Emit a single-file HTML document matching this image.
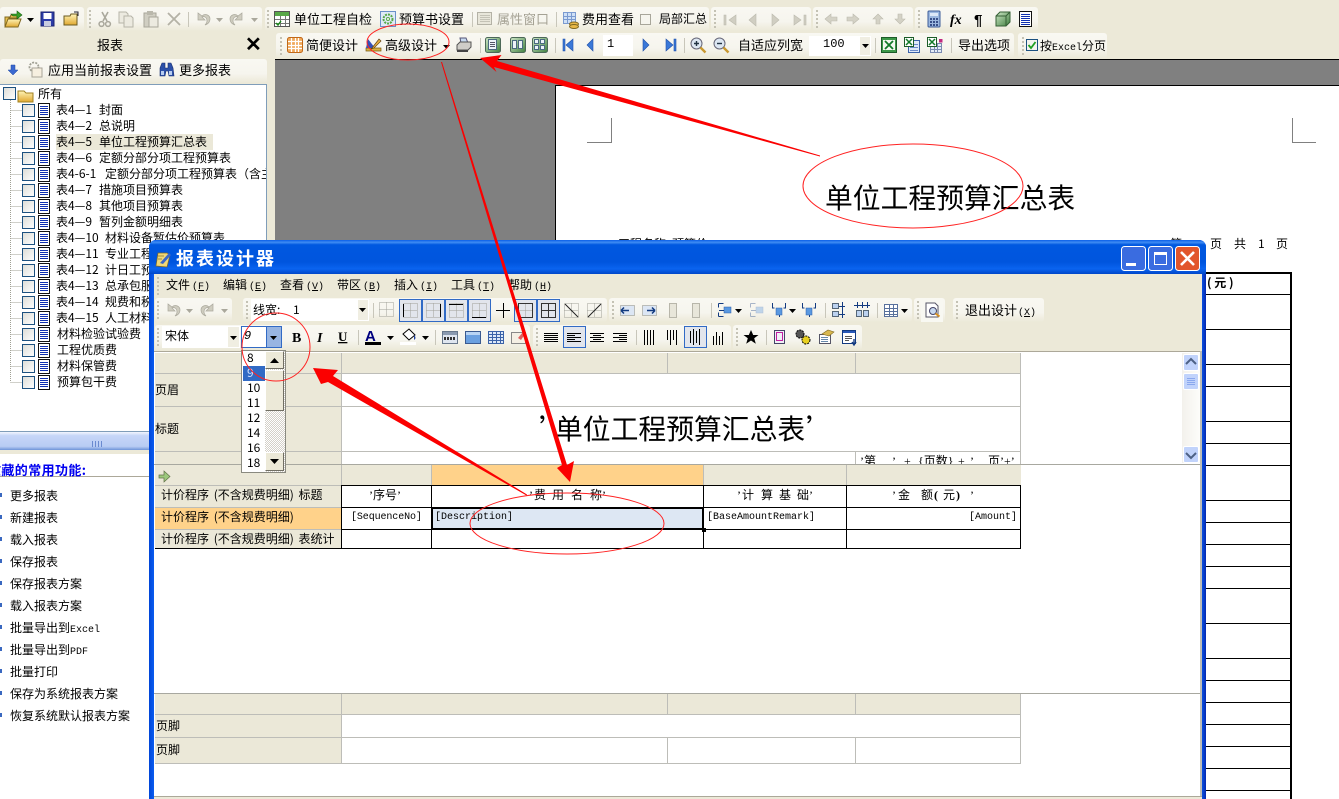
<!DOCTYPE html>
<html><head><meta charset="utf-8"><title>报表设计器</title>
<style>
html,body{margin:0;padding:0;background:#ece9d8}
#r{position:relative;width:1339px;height:799px;overflow:hidden;background:#ece9d8;font-family:"WenQuanYi Zen Hei","Noto Sans CJK SC",sans-serif;color:#000}
#r div{position:absolute}
p{position:absolute;margin:0;white-space:nowrap;line-height:16px;height:16px;font-size:12px}
.m{font-size:13px}
.g{color:#a5a294}
.c{font-family:"Liberation Mono",monospace;font-size:10px}
.s{font-family:"Liberation Serif","WenQuanYi Zen Hei",sans-serif}
.tb{background:linear-gradient(#f9f8f2,#f6f5ee 60%,#ece9d8);border-radius:3px}
.l{background:#bdbdb8}
.k{background:#000}
.bg{background:#ebe8d8}
svg{position:absolute;left:0;top:0;overflow:visible}
</style></head><body><div id="r">

<svg width="0" height="0"><defs>
<linearGradient id="cg" x1="0" y1="0" x2="1" y2="1"><stop offset="0" stop-color="#dcdcd6"/><stop offset="1" stop-color="#fff"/></linearGradient>
<linearGradient id="bl" x1="0" y1="0" x2="0" y2="1"><stop offset="0" stop-color="#c6dcf8"/><stop offset="1" stop-color="#3e74c8"/></linearGradient>
<linearGradient id="gr" x1="0" y1="0" x2="1" y2="1"><stop offset="0" stop-color="#cfe8c8"/><stop offset="1" stop-color="#3f7f3f"/></linearGradient>
<linearGradient id="yl" x1="0" y1="0" x2="0" y2="1"><stop offset="0" stop-color="#fff4b8"/><stop offset="1" stop-color="#e0a830"/></linearGradient>
<g id="cb"><rect x=".5" y=".5" width="12" height="12" fill="url(#cg)" stroke="#1c5180"/></g>
<g id="doc"><rect x=".5" y=".5" width="11" height="14" fill="#fff" stroke="#111"/><path d="M2 3.500h8M2 5.500h8M2 7.500h8M2 9.500h8M2 11.500h8" stroke="#1030b0"/></g>
<g id="grip"><path d="M0 1h2v2H0zM0 5h2v2H0zM0 9h2v2H0zM0 13h2v2H0zM0 17h2v2H0z" fill="#c4c2b4"/></g>
<g id="dn"><path d="M0 0h7L3.5 4z" fill="#000"/></g>
<g id="dng"><path d="M0 0h7L3.5 4z" fill="#aaa89c"/></g>
<g id="save"><rect x="1" y="1" width="13" height="14" fill="#2c3ca8" stroke="#1c2470"/><rect x="3.5" y="2" width="8" height="6" fill="#fff"/><rect x="4" y="10" width="7" height="5" fill="#c8cce0"/></g>
<g id="folder"><path d="M1 5h6l1-2h6v11H1z" fill="url(#yl)" stroke="#6a5a20"/><path d="M11 1h4v4" stroke="#223" fill="none"/></g>
<g id="open"><path d="M1 6h5l1-2h6v3H5L2 15H1z" fill="#e8c050" stroke="#806820"/><path d="M4 8h13l-3 8H1z" fill="url(#yl)" stroke="#806820"/><path d="M7 3h6V0l5 4-5 4V5H9z" fill="#38a028" stroke="#186010" stroke-width=".6"/></g>
<g id="cut"><path d="M5 1l5 9M11 1L6 10" stroke="#aaa89c" stroke-width="1.6" fill="none"/><circle cx="4.5" cy="13" r="2.4" fill="none" stroke="#aaa89c" stroke-width="1.5"/><circle cx="11" cy="13" r="2.4" fill="none" stroke="#aaa89c" stroke-width="1.5"/></g>
<g id="copy"><path d="M1 1h7l2 2v9H1z" fill="#eceae0" stroke="#b6b4a8"/><path d="M6 5h7l2 2v9H6z" fill="#eceae0" stroke="#b6b4a8"/></g>
<g id="paste"><rect x="1" y="2" width="12" height="14" fill="#d0cec2" stroke="#a8a69a"/><rect x="4" y="0" width="6" height="4" fill="#bab8ac"/><rect x="6" y="6" width="9" height="10" fill="#eceae0" stroke="#a8a69a"/></g>
<g id="x"><path d="M2 2l12 12M14 2L2 14" stroke="#b4b2a6" stroke-width="1.8"/></g>
<g id="undo"><path d="M3 2v7h7l-3-3c2-1 5 0 5 4 0 2-1 3-2 4 3-1 5-3 5-6 0-4-5-6-8-3L3 2z" fill="#cfcdc0" stroke="#aaa89c" stroke-width=".7"/></g>
<g id="redo"><path d="M13 2v7H6l3-3C7 5 4 6 4 10c0 2 1 3 2 4-3-1-5-3-5-6 0-4 5-6 8-3l4-3z" fill="#cfcdc0" stroke="#aaa89c" stroke-width=".7"/></g>
<g id="tbl"><rect x=".5" y=".5" width="15" height="15" fill="#fff" stroke="#555"/><rect x="1" y="1" width="14" height="4" fill="#58a848"/><path d="M1 8.500h14M1 12.500h14M6.500 5v10M11.500 5v10" stroke="#777"/><path d="M2 12l2 2 3-4" stroke="#1a8a1a" fill="none" stroke-width="1.4"/></g>
<g id="gear"><rect x=".5" y=".5" width="15" height="15" fill="#dfeaf6" stroke="#6a90c8"/><circle cx="8" cy="8" r="4.5" fill="none" stroke="#58a848" stroke-width="2" stroke-dasharray="2 1"/><circle cx="8" cy="8" r="1.5" fill="#fff" stroke="#58a848"/></g>
<g id="prop"><rect x=".5" y="1.500" width="14" height="12" fill="#e8e6da" stroke="#b4b2a6"/><path d="M3 4.500h10M3 6.500h10M3 8.500h10M3 10.500h10" stroke="#c4c2b6"/></g>
<g id="coin"><rect x=".5" y=".5" width="12" height="11" fill="#cfe0f6" stroke="#7a9ad0"/><path d="M1 4.500h12M1 7.500h12M4.500 1v11M8.500 1v11" stroke="#7a9ad0"/><ellipse cx="11" cy="12" rx="4.5" ry="2" fill="#e8b848" stroke="#806820"/><ellipse cx="11" cy="14.5" rx="4.5" ry="2" fill="#e8b848" stroke="#806820"/></g>
<g id="gf"><path d="M1 3h2v10H1zM13 3L6 8l7 5z" fill="#d0cec2" stroke="#bbb9ad" stroke-width=".6"/></g>
<g id="gp"><path d="M12 2L5 8l7 6z" fill="#d0cec2" stroke="#bbb9ad" stroke-width=".6"/></g>
<g id="gn"><path d="M4 2l7 6-7 6z" fill="#d0cec2" stroke="#bbb9ad" stroke-width=".6"/></g>
<g id="gl"><path d="M13 3h2v10h-2zM3 3l7 5-7 5z" fill="#d0cec2" stroke="#bbb9ad" stroke-width=".6"/></g>
<g id="al"><path d="M2 8l6-5v3h6v4H8v3z" fill="#d4d2c6" stroke="#bbb9ad" stroke-width=".6"/></g>
<g id="ar"><path d="M14 8L8 3v3H2v4h6v3z" fill="#d4d2c6" stroke="#bbb9ad" stroke-width=".6"/></g>
<g id="au"><path d="M8 3l5 5h-3v5H6V8H3z" fill="#d4d2c6" stroke="#bbb9ad" stroke-width=".6"/></g>
<g id="ad"><path d="M8 13l5-5h-3V3H6v5H3z" fill="#d4d2c6" stroke="#bbb9ad" stroke-width=".6"/></g>
<g id="calc"><rect x="2" y="0" width="12" height="16" rx="1" fill="#9cb8e0" stroke="#3c5c98"/><rect x="4" y="2" width="8" height="3" fill="#dce8f8"/><path d="M4 7h2v2H4zM7 7h2v2H7zM10 7h2v2h-2zM4 10h2v2H4zM7 10h2v2H7zM10 10h2v2h-2zM4 13h2v2H4zM7 13h2v2H7zM10 13h2v2h-2z" fill="#38508a"/></g>
<g id="cube"><path d="M1 5l4-4h10v10l-4 4H1z" fill="url(#gr)" stroke="#355f35"/><path d="M1 5h10v10M11 5l4-4" fill="none" stroke="#355f35"/></g>
<g id="list"><rect x=".5" y=".5" width="12" height="15" fill="#fff" stroke="#111"/><path d="M2 3.500h9M2 5.500h9M2 7.500h9M2 9.500h9M2 11.500h9M2 13.500h9" stroke="#1030b0"/></g>
<g id="grid"><rect x=".5" y=".5" width="15" height="15" rx="2" fill="#f0a858" stroke="#c06818"/><path d="M1 4.500h14M1 8.500h14M1 11.500h14M4.500 1v14M8.500 1v14M11.500 1v14" stroke="#fff" stroke-width="1.2"/></g>
<g id="pen"><path d="M1 14h15v-3H1z" fill="#d8b040" stroke="#7a5a10" stroke-width=".7"/><path d="M3 2l7 9H1z" fill="#3450b8"/><path d="M7 11L14 2l2 2-7 7-3 1z" fill="#e8b040" stroke="#604010" stroke-width=".7"/></g>
<g id="prt"><path d="M4 1h6l2 5H5z" fill="#c8daf0" stroke="#557"/><path d="M1 8l3-3h11v5l-3 3H1z" fill="#cfcdc8" stroke="#555"/><path d="M1 13h11v2H1z" fill="#444"/></g>
<g id="lay1"><rect x=".5" y=".5" width="15" height="15" rx="2" fill="url(#gr)" stroke="#4c6858"/><rect x="3.500" y="2.500" width="8" height="10" fill="#f0f4fa" stroke="#4a6a80"/><path d="M5 5.500h5M5 7.500h5M5 9.500h5" stroke="#556"/></g>
<g id="lay2"><rect x=".5" y=".5" width="15" height="15" rx="2" fill="url(#gr)" stroke="#4c6858"/><rect x="2.500" y="3.500" width="4" height="8" fill="#eef2fa" stroke="#4a6a80"/><rect x="8.500" y="3.500" width="4" height="8" fill="#eef2fa" stroke="#4a6a80"/></g>
<g id="lay3"><rect x=".5" y=".5" width="15" height="15" rx="2" fill="url(#gr)" stroke="#4c6858"/><path d="M2.500 2.500h4v4h-4zM8.500 2.500h4v4h-4zM2.500 8.500h4v4h-4zM8.500 8.500h4v4h-4z" fill="#eef2fa" stroke="#4a6a80"/></g>
<g id="first"><path d="M2 2h2v12H2zM12 2v12L5 8z" fill="#3a78d8" stroke="#2050a8" stroke-width=".6"/></g>
<g id="prev"><path d="M11 2v12L5 8z" fill="#3a78d8" stroke="#2050a8" stroke-width=".6"/></g>
<g id="next"><path d="M5 2v12l6-6z" fill="#3a78d8" stroke="#2050a8" stroke-width=".6"/></g>
<g id="last"><path d="M12 2h2v12h-2zM4 2v12l7-6z" fill="#3a78d8" stroke="#2050a8" stroke-width=".6"/></g>
<g id="zp"><circle cx="6.500" cy="6.500" r="5.500" fill="#dce6f2" stroke="#667"/><path d="M4 6.500h5M6.500 4v5" stroke="#234" stroke-width="1.4"/><path d="M10.500 10.500l5 5" stroke="#c89830" stroke-width="2.400"/></g>
<g id="zm"><circle cx="6.500" cy="6.500" r="5.500" fill="#dce6f2" stroke="#667"/><path d="M4 6.500h5" stroke="#234" stroke-width="1.4"/><path d="M10.500 10.500l5 5" stroke="#c89830" stroke-width="2.400"/></g>
<g id="xl"><rect x=".5" y=".5" width="15" height="15" fill="#3c9848" stroke="#1c5c28"/><rect x="2" y="3" width="12" height="10" fill="#f4f8f0"/><path d="M4 4l8 8M12 4l-8 8" stroke="#127a28" stroke-width="1.800"/></g>
<g id="xl2"><rect x="4.500" y="3.500" width="11" height="12" fill="#dfe9f8" stroke="#3a62a8"/><path d="M6 7.500h8M6 10.500h8M6 13.500h8" stroke="#6a8ac8"/><rect x=".5" y=".5" width="9" height="9" fill="#fff" stroke="#1c5c28"/><path d="M2 2l6 6M8 2L2 8" stroke="#127a28" stroke-width="1.500"/></g>
<g id="xl3"><rect x="3.500" y="6.500" width="11" height="9" fill="#e4ecf6" stroke="#7a8ab0"/><path d="M3 9.500h11M3 12.500h11M7.500 6v10M10.500 6v10" stroke="#7a8ab0"/><rect x=".5" y=".5" width="9" height="9" fill="#fff" stroke="#1c5c28"/><path d="M2 2l6 6M8 2L2 8" stroke="#127a28" stroke-width="1.500"/><rect x="12" y="2" width="3.500" height="3.500" fill="#c02880"/></g>
<g id="chk"><rect x=".5" y=".5" width="11" height="11" fill="#f4f4ee" stroke="#1c5180"/><path d="M2.500 6l2.500 3 4.500-6" stroke="#20a020" stroke-width="1.800" fill="none"/></g>
<g id="blue"><path d="M6 3h4v5h3l-5 5-5-5h3z" fill="#3a68d0" stroke="#2048a0" stroke-width=".5"/></g>
<g id="setg"><circle cx="6" cy="5" r="4.500" fill="none" stroke="#a0a094" stroke-width="1.800" stroke-dasharray="2 1.200"/><rect x="4" y="6" width="10" height="9" fill="#f6efe0" stroke="#a8a498"/></g>
<g id="bino"><path d="M1 6l2-5h3v5h3V1h3l2 5 1 8h-5l-1-5H7l-1 5H1z" fill="#2c50a8" stroke="#1a3070" stroke-width=".6"/><path d="M2 9h3v4H2zM10 9h3v4h-3z" fill="#b8cdf0"/></g>
<g id="dot"><rect x=".5" y=".5" width="14" height="14" fill="none" stroke="#a0a098" stroke-dasharray="1 1"/><path d="M.5 7.500h14M7.500 .5v14" stroke="#a0a098" stroke-dasharray="1 1"/></g>
<g id="btn"><rect x=".5" y=".5" width="22" height="22" fill="#e2e5ec" stroke="#316ac5"/><g transform="translate(4 4)"><use href="#dot"/></g></g>
<g id="lf"><rect x="1.500" y="3.500" width="14" height="10" fill="#dce6f4" stroke="#8a8a80" stroke-dasharray="1 1"/><path d="M2 8.500h8M2 8.500l3-3M2 8.500l3 3" stroke="#123a80" stroke-width="1.500" fill="none"/></g>
<g id="rt"><rect x="1.500" y="3.500" width="14" height="10" fill="#dce6f4" stroke="#8a8a80" stroke-dasharray="1 1"/><path d="M14 8.500H6M14 8.500l-3-3M14 8.500l-3 3" stroke="#123a80" stroke-width="1.500" fill="none"/></g>
<g id="colx"><path d="M2.500 1.500h5M2.500 14.500h5M2.500 1.500v4M2.500 10.500v4" stroke="#123a80" fill="none"/><rect x="8" y="5" width="7" height="6" fill="#5a98e0" stroke="#2c5ca8" stroke-width=".5"/><path d="M3 8.500h5" stroke="#123a80"/></g>
<g id="rowx"><path d="M1.500 1v5h2M14.500 1v5h-2M8.500 6v9" stroke="#123a80" fill="none"/><rect x="5" y="6" width="6" height="7" fill="#5a98e0" stroke="#2c5ca8" stroke-width=".5"/></g>
<g id="mix"><rect x="1.500" y="1.500" width="6" height="5" fill="#bcd2f0" stroke="#567"/><rect x="1.500" y="9.500" width="6" height="5" fill="#bcd2f0" stroke="#567"/><path d="M11.500 0v16M8 4.500h6M8 12.500h6" stroke="#123a80"/></g>
<g id="mix2"><rect x="2.500" y="8.500" width="5" height="6" fill="#bcd2f0" stroke="#567"/><rect x="9.500" y="8.500" width="5" height="6" fill="#bcd2f0" stroke="#567"/><path d="M0 3.500h16M3.500 0v6M8.500 0v6M13.500 0v6" stroke="#123a80"/></g>
<g id="t3"><rect x=".5" y="1.500" width="13" height="12" fill="#fff" stroke="#58709c"/><path d="M.5 5.500h13M.5 8.500h13M.5 11.500h13M5.500 1.500v12M9.500 1.500v12" stroke="#58709c"/></g>
<g id="pre"><path d="M1 1h9l3 3v11H1z" fill="#fff" stroke="#556"/><circle cx="8" cy="9" r="3.500" fill="#c8daf0" stroke="#446"/><path d="M10.500 11.500l4 3" stroke="#d89020" stroke-width="2"/></g>
<g id="ctl"><rect x="1.500" y="2.500" width="15" height="12" fill="#dfe6f0" stroke="#68788c"/><rect x="2" y="3" width="14" height="3" fill="#8a9ab0"/><path d="M3 9.500h11" stroke="#333" stroke-width="3" stroke-dasharray="2 1"/></g>
<g id="pnl"><rect x="1.500" y="2.500" width="15" height="12" fill="#6aa0e0" stroke="#3a5a90"/><rect x="2" y="3" width="14" height="3" fill="#b8d4f4"/></g>
<g id="tgr"><rect x="1.500" y="2.500" width="15" height="12" fill="#dce8f8" stroke="#3a62a8"/><path d="M1 5.500h15M1 8.500h15M1 11.500h15M5.500 2v13M9.500 2v13M13.500 2v13" stroke="#3a62a8"/></g>
<g id="rtb"><rect x="1.500" y="3.500" width="14" height="11" fill="#f4efe4" stroke="#888"/><path d="M8 9l5-6 2 2-4 6z" fill="#e06060"/></g>
<g id="a1"><path d="M1 3.500h14M1 5.500h14M1 7.500h14M1 9.500h14M1 11.500h14" stroke="#000"/></g>
<g id="a2"><path d="M1 3.500h14M1 5.500h8M1 7.500h14M1 9.500h8M1 11.500h14" stroke="#000"/></g>
<g id="a3"><path d="M1 3.500h14M4 5.500h8M1 7.500h14M4 9.500h8M1 11.500h14" stroke="#000"/></g>
<g id="a4"><path d="M1 3.500h14M7 5.500h8M1 7.500h14M7 9.500h8M1 11.500h14" stroke="#000"/></g>
<g id="v1"><path d="M2.500 0v15M5.500 0v15M8.500 0v15M11.500 0v15" stroke="#000"/></g>
<g id="v2"><path d="M2.500 0v10M5.500 0v15M8.500 0v10M11.500 0v15" stroke="#000"/></g>
<g id="v3"><path d="M2.500 2v12M5.500 0v16M8.500 2v12M11.500 0v16" stroke="#000"/></g>
<g id="v4"><path d="M2.500 6v9M5.500 2v13M8.500 6v9M11.500 2v13" stroke="#000"/></g>
<g id="ico1"><rect x="2.500" y="1.500" width="10" height="13" fill="#f0f0f8" stroke="#446"/><rect x="4.500" y="3.500" width="6" height="8" fill="none" stroke="#c020a0"/></g>
<g id="ico2"><circle cx="5" cy="5" r="4" fill="#555" stroke="#000" stroke-dasharray="2 1"/><circle cx="11" cy="11" r="4" fill="#e8d020" stroke="#000" stroke-dasharray="2 1"/></g>
<g id="ico3"><rect x="1.500" y="5.500" width="11" height="9" fill="#fff" stroke="#556"/><path d="M3 8.500h7M3 10.500h7M3 12.500h7" stroke="#68a"/><path d="M4 5l6-4 6 2-5 4z" fill="#d8b850" stroke="#806820" stroke-width=".6"/></g>
<g id="ico4"><rect x="1.500" y="1.500" width="13" height="13" fill="#fff" stroke="#123a80"/><rect x="2" y="2" width="12" height="2" fill="#2858b8"/><path d="M4 7.500h7M4 9.500h7M4 11.500h4" stroke="#555"/><path d="M13 10v5M11 13l2 3 2-3" stroke="#123a80" stroke-width="1.400" fill="none"/></g>
</defs></svg>

<!-- top toolbars -->
<div class="tb" style="left:0;top:7px;width:84px;height:24px"></div>
<div class="tb" style="left:87px;top:7px;width:175px;height:24px"></div>
<div class="tb" style="left:265px;top:7px;width:444px;height:24px"></div>
<div class="tb" style="left:711px;top:7px;width:100px;height:24px"></div>
<div class="tb" style="left:813px;top:7px;width:100px;height:24px"></div>
<div class="tb" style="left:915px;top:7px;width:123px;height:24px"></div>
<div class="tb" style="left:276px;top:33px;width:738px;height:25px"></div>
<div class="tb" style="left:1018px;top:33px;width:89px;height:25px"></div>
<div class="tb" style="left:0;top:59px;width:267px;height:24px"></div>

<p class="m" style="left:294px;top:11px">单位工程自检</p>
<p class="m" style="left:399px;top:11px">预算书设置</p>
<p class="m g" style="left:497px;top:11px">属性窗口</p>
<p class="m" style="left:582px;top:11px">费用查看</p>
<p style="left:659px;top:11px">局部汇总</p>
<p class="m" style="left:97px;top:37px">报表</p>
<p style="left:245px;top:35px;font-size:20px;font-weight:bold;line-height:20px;height:20px;font-family:'Liberation Sans',sans-serif">✕</p>
<p class="m" style="left:306px;top:37px">简便设计</p>
<p class="m" style="left:385px;top:37px">高级设计</p>
<div style="left:603px;top:35px;width:30px;height:21px;background:#fff"></div>
<p class="c" style="left:607px;top:36px;font-size:12px">1</p>
<p class="m" style="left:738px;top:37px">自适应列宽</p>
<div style="left:809px;top:36px;width:62px;height:20px;background:#fff"></div>
<div style="left:860px;top:37px;width:10px;height:18px;background:#f0eee2"></div>
<p class="c" style="left:823px;top:36px;font-size:12px">100</p>
<p class="m" style="left:958px;top:37px">导出选项</p>
<p class="m" style="left:1040px;top:38px;font-size:12px">按<span style="font-family:'Liberation Mono',monospace;font-size:10px">Excel</span>分页</p>
<p class="m" style="left:48px;top:62px">应用当前报表设置</p>
<p class="m" style="left:179px;top:62px">更多报表</p>

<!-- gray & page -->
<div style="left:275px;top:59px;width:1064px;height:740px;background:#808080;border-top:1px solid #000;box-sizing:border-box"></div>
<div style="left:555px;top:85px;width:784px;height:714px;background:#fff;border-top:1px solid #000;border-left:1px solid #000;box-sizing:border-box"></div>
<div style="left:611px;top:118px;width:1px;height:24px;background:#808080"></div>
<div style="left:587px;top:142px;width:25px;height:1px;background:#808080"></div>
<div style="left:1292px;top:118px;width:1px;height:24px;background:#808080"></div>
<div style="left:1292px;top:142px;width:24px;height:1px;background:#808080"></div>
<p style="left:825px;top:180px;font-size:27.800px;line-height:34px;height:34px">单位工程预算汇总表</p>
<p style="left:618px;top:236px">工程名称: 预算价</p>
<p style="left:1170px;top:236px">第</p>
<p style="left:1210px;top:236px">页</p><p style="left:1234px;top:236px">共</p><p style="left:1258px;top:236px">1</p><p style="left:1276px;top:236px">页</p>
<p style="left:1207px;top:275px;font-weight:bold;font-size:12px">( 元 )</p>
<svg width="1339" height="799">
<path d="M1205 294.500h85M1205 329.500h85M1205 364.500h85M1205 386.500h85M1205 421.500h85M1205 443.500h85M1205 465.500h85M1205 500.500h85M1205 522.500h85M1205 544.500h85M1205 566.500h85M1205 588.500h85M1205 623.500h85M1205 658.500h85M1205 680.500h85M1205 702.500h85M1205 724.500h85M1205 746.500h85M1205 768.500h85M1205 790.500h85" stroke="#000" stroke-width="1"/>
<rect x="1205" y="272" width="86" height="2" fill="#000"/>
<rect x="1290" y="272" width="2" height="527" fill="#000"/>
</svg>

<!-- left panel -->
<div style="left:0;top:84px;width:267px;height:348px;background:#fff;border:1px solid #7f9db9;border-left:0;box-sizing:border-box"></div>
<div style="left:0;top:432px;width:150px;height:18px;background:linear-gradient(#f2f6fe,#c6d6f8 20%,#b8ccf4 80%,#6f94d8)"></div>
<div style="left:0;top:450px;width:150px;height:4px;background:#ece9d8"></div>
<div style="left:0;top:454px;width:150px;height:345px;background:#fff"></div>
<div style="left:0;top:476px;width:150px;height:1px;background:#aca899"></div>
<p class="m" style="left:-12px;top:462px;font-weight:bold;color:#0000f0;letter-spacing:.4px">收藏的常用功能:</p>
<p style="left:38px;top:86px">所有</p>
<div style="left:56px;top:134px;width:157px;height:16px;background:#ebe8d8"></div>
<p style="left:56px;top:102px">表4—1</p><p style="left:99px;top:102px">封面</p>
<p style="left:56px;top:118px">表4—2</p><p style="left:99px;top:118px">总说明</p>
<p style="left:56px;top:134px">表4—5</p><p style="left:99px;top:134px">单位工程预算汇总表</p>
<p style="left:56px;top:150px">表4—6</p><p style="left:99px;top:150px">定额分部分项工程预算表</p>
<p style="left:56px;top:166px">表4-6-1</p>
<div style="left:105px;top:166px;width:161px;height:16px;overflow:hidden"><p style="left:0;top:0">定额分部分项工程预算表（含主</p></div>
<p style="left:56px;top:182px">表4—7</p><p style="left:99px;top:182px">措施项目预算表</p>
<p style="left:56px;top:198px">表4—8</p><p style="left:99px;top:198px">其他项目预算表</p>
<p style="left:56px;top:214px">表4—9</p><p style="left:99px;top:214px">暂列金额明细表</p>
<p style="left:56px;top:230px">表4—10</p><p style="left:105px;top:230px">材料设备暂估价预算表</p>
<p style="left:56px;top:246px">表4—11</p><p style="left:105px;top:246px">专业工程暂估价</p>
<p style="left:56px;top:262px">表4—12</p><p style="left:105px;top:262px">计日工预算表</p>
<p style="left:56px;top:278px">表4—13</p><p style="left:105px;top:278px">总承包服务费</p>
<p style="left:56px;top:294px">表4—14</p><p style="left:105px;top:294px">规费和税金</p>
<p style="left:56px;top:310px">表4—15</p><p style="left:105px;top:310px">人工材料</p>
<p style="left:57px;top:326px">材料检验试验费</p>
<p style="left:57px;top:342px">工程优质费</p>
<p style="left:57px;top:358px">材料保管费</p>
<p style="left:57px;top:374px">预算包干费</p>
<p style="left:10px;top:488px">更多报表</p>
<p style="left:10px;top:510px">新建报表</p>
<p style="left:10px;top:532px">载入报表</p>
<p style="left:10px;top:554px">保存报表</p>
<p style="left:10px;top:576px">保存报表方案</p>
<p style="left:10px;top:598px">载入报表方案</p>
<p style="left:10px;top:620px">批量导出到<span class="c">Excel</span></p>
<p style="left:10px;top:642px">批量导出到<span class="c">PDF</span></p>
<p style="left:10px;top:664px">批量打印</p>
<p style="left:10px;top:686px">保存为系统报表方案</p>
<p style="left:10px;top:708px">恢复系统默认报表方案</p>

<svg width="1339" height="799">
<path d="M10.500 100v282M10.500 110.500h11M10.500 126.500h11M10.500 142.500h11M10.500 158.500h11M10.500 174.500h11M10.500 190.500h11M10.500 206.500h11M10.500 222.500h11M10.500 238.500h11M10.500 254.500h11M10.500 270.500h11M10.500 286.500h11M10.500 302.500h11M10.500 318.500h11M10.500 334.500h11M10.500 350.500h11M10.500 366.500h11M10.500 382.500h11" stroke="#a0a094" stroke-dasharray="1 1"/>
<use href="#cb" x="3" y="87"/><path d="M18 91h6l2 2h7v9H18z" fill="url(#yl)" stroke="#a08020"/>
<g id="rows">
<use href="#cb" x="22" y="104"/><use href="#doc" x="38" y="103"/>
<use href="#cb" x="22" y="120"/><use href="#doc" x="38" y="119"/>
<use href="#cb" x="22" y="136"/><use href="#doc" x="38" y="135"/>
<use href="#cb" x="22" y="152"/><use href="#doc" x="38" y="151"/>
<use href="#cb" x="22" y="168"/><use href="#doc" x="38" y="167"/>
<use href="#cb" x="22" y="184"/><use href="#doc" x="38" y="183"/>
<use href="#cb" x="22" y="200"/><use href="#doc" x="38" y="199"/>
<use href="#cb" x="22" y="216"/><use href="#doc" x="38" y="215"/>
<use href="#cb" x="22" y="232"/><use href="#doc" x="38" y="231"/>
<use href="#cb" x="22" y="248"/><use href="#doc" x="38" y="247"/>
<use href="#cb" x="22" y="264"/><use href="#doc" x="38" y="263"/>
<use href="#cb" x="22" y="280"/><use href="#doc" x="38" y="279"/>
<use href="#cb" x="22" y="296"/><use href="#doc" x="38" y="295"/>
<use href="#cb" x="22" y="312"/><use href="#doc" x="38" y="311"/>
<use href="#cb" x="22" y="328"/><use href="#doc" x="38" y="327"/>
<use href="#cb" x="22" y="344"/><use href="#doc" x="38" y="343"/>
<use href="#cb" x="22" y="360"/><use href="#doc" x="38" y="359"/>
<use href="#cb" x="22" y="376"/><use href="#doc" x="38" y="375"/>
</g>
<path d="M92 441h1v6h-1zM95 441h1v6h-1zM98 441h1v6h-1zM101 441h1v6h-1z" fill="#6a8ad0"/>
<path d="M0 493h2v4H0zM0 515h2v4H0zM0 537h2v4H0zM0 559h2v4H0zM0 581h2v4H0zM0 603h2v4H0zM0 625h2v4H0zM0 647h2v4H0zM0 669h2v4H0zM0 691h2v4H0zM0 713h2v4H0z" fill="#3a68c0"/>
<!-- toolbar icons -->
<use href="#open" x="4" y="11"/><use href="#dn" x="27" y="18"/><use href="#save" x="40" y="11"/><use href="#folder" x="63" y="11"/>
<use href="#grip" x="89" y="9"/><use href="#cut" x="97" y="11"/><use href="#copy" x="118" y="11"/><use href="#paste" x="143" y="11"/><use href="#x" x="166" y="11"/>
<path d="M188.500 12v15M472.500 12v15M556.500 12v15" stroke="#c8c6ba"/>
<use href="#undo" x="195" y="11"/><use href="#dng" x="216" y="18"/><use href="#redo" x="229" y="11"/><use href="#dng" x="251" y="18"/>
<use href="#grip" x="267" y="9"/><use href="#tbl" x="274" y="11"/><use href="#gear" x="380" y="11"/><use href="#prop" x="477" y="11"/><use href="#coin" x="563" y="12"/>
<rect x="640.500" y="14.500" width="10" height="10" fill="#f6f5ee" stroke="#a8a69a"/>
<use href="#grip" x="714" y="9"/><use href="#gf" x="723" y="12"/><use href="#gp" x="744" y="12"/><use href="#gn" x="768" y="12"/><use href="#gl" x="791" y="12"/>
<use href="#grip" x="816" y="9"/><use href="#al" x="823" y="11"/><use href="#ar" x="845" y="11"/><use href="#au" x="870" y="11"/><use href="#ad" x="892" y="11"/>
<use href="#grip" x="918" y="9"/><use href="#calc" x="926" y="11"/><text x="950" y="24" font-family="Liberation Serif" font-style="italic" font-weight="bold" font-size="14">fx</text><text x="974" y="25" font-family="Liberation Sans" font-weight="bold" font-size="15">¶</text><use href="#cube" x="995" y="11"/><use href="#list" x="1019" y="11"/>
<use href="#grip" x="280" y="36"/><use href="#grid" x="287" y="37"/><use href="#pen" x="365" y="37"/><use href="#dn" x="443" y="45"/><use href="#prt" x="456" y="37"/>
<path d="M480.500 38v15M555.500 38v15M684.500 38v15M875.500 38v15M951.500 38v15" stroke="#c8c6ba"/>
<use href="#lay1" x="485" y="37"/><use href="#lay2" x="510" y="37"/><use href="#lay3" x="532" y="37"/>
<use href="#first" x="561" y="37"/><use href="#prev" x="582" y="37"/><use href="#next" x="638" y="37"/><use href="#last" x="662" y="37"/>
<use href="#zp" x="690" y="37"/><use href="#zm" x="713" y="37"/><use href="#dn" x="862" y="44"/>
<use href="#xl" x="881" y="37"/><use href="#xl2" x="904" y="37"/><use href="#xl3" x="927" y="37"/>
<use href="#grip" x="1022" y="36"/><use href="#chk" x="1026" y="39"/>
<use href="#blue" x="5" y="62"/><use href="#setg" x="28" y="62"/><use href="#bino" x="159" y="62"/>
</svg>

<!-- designer window -->
<div style="left:149px;top:240px;width:1057px;height:559px;background:#0831d9;border-radius:7px 7px 0 0"></div>
<div style="left:149px;top:240px;width:1057px;height:34px;border-radius:7px 7px 0 0;background:linear-gradient(#0a5fe8,#3f8cf3 7%,#0058e0 14%,#0055de 65%,#0a64f0 85%,#0046c8)"></div>
<div style="left:149px;top:274px;width:5px;height:525px;background:linear-gradient(90deg,#0046d8,#0a5cf0)"></div>
<div style="left:1202px;top:274px;width:4px;height:525px;background:linear-gradient(90deg,#0a50e0,#0428b0)"></div>
<div style="left:154px;top:274px;width:1048px;height:78px;background:#ece9d8"></div>
<div style="left:154px;top:351px;width:1048px;height:448px;background:#fff;border-top:1px solid #aca899;box-sizing:border-box"></div>
<p style="left:176px;top:247px;font-size:18px;font-weight:bold;color:#fff;line-height:22px;height:22px;letter-spacing:2px">报表设计器</p>

<p style="left:166px;top:277px">文件<span class="c" style="margin-left:2px">(<u>F</u>)</span></p>
<p style="left:223px;top:277px">编辑<span class="c" style="margin-left:2px">(<u>E</u>)</span></p>
<p style="left:280px;top:277px">查看<span class="c" style="margin-left:2px">(<u>V</u>)</span></p>
<p style="left:337px;top:277px">带区<span class="c" style="margin-left:2px">(<u>B</u>)</span></p>
<p style="left:394px;top:277px">插入<span class="c" style="margin-left:2px">(<u>I</u>)</span></p>
<p style="left:451px;top:277px">工具<span class="c" style="margin-left:2px">(<u>T</u>)</span></p>
<p style="left:508px;top:277px">帮助<span class="c" style="margin-left:2px">(<u>H</u>)</span></p>

<div class="tb" style="left:155px;top:298px;width:77px;height:24px"></div>
<div class="tb" style="left:243px;top:298px;width:364px;height:24px"></div>
<div class="tb" style="left:609px;top:298px;width:303px;height:24px"></div>
<div class="tb" style="left:914px;top:298px;width:31px;height:24px"></div>
<div class="tb" style="left:953px;top:298px;width:91px;height:24px"></div>
<div class="tb" style="left:155px;top:325px;width:375px;height:25px"></div>
<div class="tb" style="left:533px;top:325px;width:198px;height:25px"></div>
<div class="tb" style="left:733px;top:325px;width:129px;height:25px"></div>
<div style="left:251px;top:299px;width:118px;height:22px;background:#fff"></div>
<div style="left:358px;top:300px;width:10px;height:20px;background:#f0eee2"></div>
<p style="left:253px;top:302px">线宽:</p><p style="left:293px;top:302px">1</p>
<div style="left:162px;top:326px;width:78px;height:22px;background:#fff"></div>
<div style="left:228px;top:327px;width:11px;height:20px;background:#f0eee2"></div>
<p style="left:165px;top:328px">宋体</p>
<div style="left:241px;top:326px;width:41px;height:22px;background:#fff;border:1px solid #316ac5;box-sizing:border-box"></div>
<div style="left:266px;top:326px;width:16px;height:22px;background:#98b5e2;border:1px solid #316ac5;box-sizing:border-box"></div>
<p class="c" style="left:244px;top:328px;font-size:12px;font-style:italic">9</p>
<p class="m" style="left:965px;top:302px">退出设计<span class="c" style="margin-left:1px">(<u>X</u>)</span></p>

<!-- grid section 1 -->
<div class="bg" style="left:155px;top:353px;width:866px;height:21px"></div>
<div class="bg" style="left:155px;top:374px;width:186px;height:90px"></div>
<div class="l" style="left:155px;top:373px;width:866px;height:1px"></div>
<div class="l" style="left:155px;top:406px;width:866px;height:1px"></div>
<div class="l" style="left:155px;top:451px;width:866px;height:1px"></div>
<div class="l" style="left:341px;top:353px;width:1px;height:111px"></div>
<div class="l" style="left:667px;top:353px;width:1px;height:20px"></div>
<div class="l" style="left:855px;top:353px;width:1px;height:20px"></div>
<div class="l" style="left:855px;top:452px;width:1px;height:12px"></div>
<div class="l" style="left:1020px;top:353px;width:1px;height:111px"></div>
<p style="left:155px;top:382px">页眉</p>
<p style="left:155px;top:421px">标题</p>
<p style="left:539px;top:410px;font-size:27.800px;line-height:36px;height:36px">’</p>
<p style="left:555px;top:410px;font-size:27.800px;line-height:36px;height:36px">单位工程预算汇总表</p>
<p style="left:806px;top:410px;font-size:27.800px;line-height:36px;height:36px">’</p>
<div style="left:856px;top:452px;width:164px;height:12px;overflow:hidden">
<p class="s" style="left:4px;top:1px">’第</p><p class="s" style="left:36px;top:1px">’</p><p class="s" style="left:48px;top:1px">+</p><p class="s" style="left:62px;top:1px">{页数}</p><p class="s" style="left:102px;top:1px">+</p><p class="s" style="left:114px;top:1px">’</p><p class="s" style="left:132px;top:1px">页’+’</p>
</div>
<!-- scrollbar -->
<div style="left:1182px;top:353px;width:18px;height:110px;background:linear-gradient(90deg,#f3f1ec,#fdfdfa)"></div>
<div style="left:1183px;top:354px;width:16px;height:17px;background:#c1d3fb;border:1px solid #fff;border-radius:2px;box-sizing:border-box"></div>
<div style="left:1183px;top:373px;width:16px;height:17px;background:#c1d3fb;border:1px solid #fff;border-radius:2px;box-sizing:border-box"></div>
<div style="left:1183px;top:446px;width:16px;height:17px;background:#c1d3fb;border:1px solid #fff;border-radius:2px;box-sizing:border-box"></div>
<div class="l" style="left:154px;top:464px;width:1046px;height:1px;background:#a8a8a0"></div>

<!-- grid section 2 -->
<div class="bg" style="left:155px;top:465px;width:866px;height:20px"></div>
<div style="left:431px;top:465px;width:273px;height:20px;background:#ffd28a"></div>
<div class="bg" style="left:155px;top:485px;width:186px;height:63px"></div>
<div style="left:155px;top:507px;width:186px;height:22px;background:#ffd28a"></div>
<div class="l" style="left:155px;top:485px;width:866px;height:1px"></div>
<div class="l" style="left:155px;top:507px;width:186px;height:1px"></div>
<div class="l" style="left:155px;top:529px;width:186px;height:1px"></div>
<div class="l" style="left:341px;top:465px;width:1px;height:20px"></div>
<div class="l" style="left:431px;top:465px;width:1px;height:20px"></div>
<div class="l" style="left:703px;top:465px;width:1px;height:20px"></div>
<div class="l" style="left:846px;top:465px;width:1px;height:20px"></div>
<div style="left:432px;top:507px;width:272px;height:23px;background:#dde7f3"></div>
<div class="k" style="left:341px;top:485px;width:1px;height:64px"></div>
<div class="k" style="left:431px;top:485px;width:1px;height:64px"></div>
<div class="k" style="left:703px;top:485px;width:1px;height:64px"></div>
<div class="k" style="left:846px;top:485px;width:1px;height:64px"></div>
<div class="k" style="left:1020px;top:485px;width:1px;height:64px"></div>
<div class="k" style="left:341px;top:485px;width:680px;height:1px"></div>
<div class="k" style="left:341px;top:507px;width:680px;height:1px"></div>
<div class="k" style="left:341px;top:529px;width:680px;height:1px"></div>
<div class="k" style="left:155px;top:548px;width:866px;height:1px"></div>
<div style="left:431px;top:507px;width:273px;height:23px;border:2px solid #000;box-sizing:border-box"></div>
<div class="k" style="left:702px;top:528px;width:4px;height:4px"></div>
<p style="left:161px;top:487px;word-spacing:2px">计价程序 (不含规费明细) 标题</p>
<p style="left:161px;top:509px;word-spacing:2px">计价程序 (不含规费明细)</p>
<p style="left:161px;top:531px;word-spacing:2px">计价程序 (不含规费明细) 表统计</p>
<p class="s" style="left:369px;top:487px">’序号’</p>
<p class="s" style="left:529px;top:487px">’</p><p class="s" style="left:534px;top:487px">费</p><p class="s" style="left:552px;top:487px">用</p><p class="s" style="left:571px;top:487px">名</p><p class="s" style="left:590px;top:487px">称’</p>
<p class="s" style="left:737px;top:487px">’</p><p class="s" style="left:742px;top:487px">计</p><p class="s" style="left:761px;top:487px">算</p><p class="s" style="left:779px;top:487px">基</p><p class="s" style="left:797px;top:487px">础’</p>
<p class="s" style="left:892px;top:487px">’</p><p class="s" style="left:898px;top:487px">金</p><p class="s" style="left:921px;top:487px">额</p><p class="s" style="left:934px;top:487px;font-weight:bold">(</p><p class="s" style="left:943px;top:487px">元</p><p class="s" style="left:956px;top:487px;font-weight:bold">)</p><p class="s" style="left:970px;top:487px">’</p>
<p class="c" style="left:351px;top:510px;letter-spacing:-.1px">[SequenceNo]</p>
<p class="c" style="left:435px;top:510px">[Description]</p>
<p class="c" style="left:707px;top:510px">[BaseAmountRemark]</p>
<p class="c" style="left:969px;top:510px">[Amount]</p>

<!-- grid section 3 -->
<div class="l" style="left:154px;top:693px;width:1046px;height:1px;background:#a8a8a0"></div>
<div class="bg" style="left:155px;top:694px;width:866px;height:20px"></div>
<div class="bg" style="left:155px;top:714px;width:186px;height:49px"></div>
<div class="l" style="left:155px;top:714px;width:866px;height:1px"></div>
<div class="l" style="left:155px;top:737px;width:866px;height:1px"></div>
<div class="l" style="left:155px;top:763px;width:866px;height:1px"></div>
<div class="l" style="left:341px;top:694px;width:1px;height:70px"></div>
<div class="l" style="left:667px;top:694px;width:1px;height:20px"></div>
<div class="l" style="left:855px;top:694px;width:1px;height:20px"></div>
<div class="l" style="left:667px;top:738px;width:1px;height:25px"></div>
<div class="l" style="left:855px;top:738px;width:1px;height:25px"></div>
<div class="l" style="left:1020px;top:694px;width:1px;height:70px"></div>
<p style="left:156px;top:718px">页脚</p>
<p style="left:156px;top:742px">页脚</p>
<div style="left:154px;top:796px;width:1048px;height:3px;background:#ece9d8;border-top:1px solid #aca899;box-sizing:border-box"></div>
<div style="left:1200px;top:351px;width:2px;height:445px;background:#bdbdb8"></div>

<!-- font size dropdown -->
<div style="left:241px;top:350px;width:45px;height:123px;background:#fff;border:1px solid #8a8a80;box-sizing:border-box"></div>
<div style="left:243px;top:366px;width:22px;height:15px;background:#316ac5"></div>
<div style="left:265px;top:351px;width:20px;height:121px;background:repeating-conic-gradient(#d4d0c8 0 25%,#fff 0 50%) 0 0/2px 2px"></div>
<div style="left:265px;top:351px;width:19px;height:18px;background:#ece9d8;border:1px solid;border-color:#fff #716f64 #716f64 #fff;box-sizing:border-box"></div>
<div style="left:265px;top:370px;width:19px;height:41px;background:#ece9d8;border:1px solid;border-color:#fff #716f64 #716f64 #fff;box-sizing:border-box"></div>
<div style="left:265px;top:452px;width:19px;height:19px;background:#ece9d8;border:1px solid;border-color:#fff #716f64 #716f64 #fff;box-sizing:border-box"></div>
<p style="left:247px;top:350px">8</p><p style="left:247px;top:365px;color:#cfe0ff">9</p>
<p style="left:247px;top:380px">10</p><p style="left:247px;top:395px">11</p><p style="left:247px;top:410px">12</p><p style="left:247px;top:425px">14</p><p style="left:247px;top:440px">16</p><p style="left:247px;top:455px">18</p>

<svg width="1339" height="799">
<!-- window controls -->
<g stroke="#fff"><rect x="1121.500" y="246.500" width="24" height="24" rx="3" fill="#3a6ce0"/><rect x="1148.500" y="246.500" width="24" height="24" rx="3" fill="#3a6ce0"/><rect x="1175.500" y="246.500" width="24" height="24" rx="3" fill="#e2562c"/></g>
<rect x="1126" y="263" width="10" height="3" fill="#fff"/><rect x="1154.500" y="252.500" width="12" height="12" fill="none" stroke="#fff" stroke-width="1"/><rect x="1154" y="252" width="13" height="3" fill="#fff"/>
<path d="M1181 252l13 13M1194 252l-13 13" stroke="#fff" stroke-width="2.600"/>
<path d="M156 266l2-13h9l3 2-3 12z" fill="#f0d878" stroke="#806820" stroke-width=".7"/><path d="M160 263l9-10 2 2-8 9z" fill="#3a68c8"/><path d="M158 256h6M158 259h4" stroke="#a08a40"/>
<!-- designer icons -->
<use href="#grip" x="157" y="276"/>
<use href="#grip" x="157" y="300"/><use href="#undo" x="165" y="302"/><use href="#dng" x="186" y="309"/><use href="#redo" x="200" y="302"/><use href="#dng" x="221" y="309"/>
<use href="#grip" x="246" y="300"/><use href="#dn" x="359" y="308"/>
<path d="M373.500 303v15M711.500 303v15M825.500 303v15M877.500 303v15M358.500 330v15M435.500 330v15M636.500 330v15M766.500 330v15" stroke="#c8c6ba"/>
<use href="#dot" x="379" y="302"/>
<use href="#btn" x="399" y="299"/><use href="#btn" x="422" y="299"/><use href="#btn" x="445" y="299"/><use href="#btn" x="468" y="299"/>
<path d="M403.500 304v13M440.500 304v13M449 304.500h14M472 317.500h14" stroke="#000"/>
<path d="M496 310.500h14M503.500 303v15" stroke="#000"/>
<use href="#btn" x="514" y="299"/><use href="#btn" x="537" y="299"/>
<rect x="518.500" y="303.500" width="14" height="14" fill="none" stroke="#333"/><rect x="541.500" y="303.500" width="14" height="14" fill="none" stroke="#333"/><path d="M541.500 310.500h14M548.500 303.500v14" stroke="#333"/>
<use href="#dot" x="564" y="303"/><path d="M565 304l13 13" stroke="#222"/><use href="#dot" x="587" y="303"/><path d="M588 317l13-13" stroke="#222"/>
<use href="#grip" x="612" y="300"/><use href="#lf" x="619" y="302"/><use href="#rt" x="641" y="302"/>
<path d="M669.500 303.500h7v14h-7zM692.500 303.500h7v14h-7z" fill="#e8e6da" stroke="#b8b6aa"/>
<use href="#colx" x="716" y="302"/><use href="#dn" x="735" y="309"/><g opacity=".35"><use href="#colx" x="748" y="302"/></g>
<use href="#rowx" x="771" y="302"/><use href="#dn" x="789" y="309"/><use href="#rowx" x="801" y="302"/>
<use href="#mix" x="831" y="302"/><use href="#mix2" x="854" y="302"/><use href="#t3" x="884" y="303"/><use href="#dn" x="901" y="309"/>
<use href="#grip" x="917" y="300"/><rect x="921" y="300" width="22" height="22" fill="#f8f8f2"/><use href="#pre" x="925" y="302"/><use href="#grip" x="956" y="300"/>
<use href="#grip" x="157" y="327"/><use href="#dn" x="230" y="336"/><use href="#dn" x="270" y="336"/>
<text x="292" y="342" font-family="Liberation Serif" font-weight="bold" font-size="14">B</text><text x="317" y="342" font-family="Liberation Serif" font-style="italic" font-weight="bold" font-size="14">I</text><text x="338" y="341" font-family="Liberation Serif" font-weight="bold" font-size="13" text-decoration="underline">U</text>
<text x="365" y="341" font-family="Liberation Sans" font-weight="bold" font-size="15" fill="#000080">A</text><rect x="365" y="342" width="16" height="3" fill="#000"/><use href="#dn" x="387" y="336"/>
<path d="M403 334l6-5 6 6-6 5z" fill="#fff" stroke="#000"/><path d="M414 335q3 3 0 5z" fill="#2040a0"/><rect x="400" y="342" width="16" height="3" fill="#fff"/><use href="#dn" x="422" y="336"/>
<use href="#ctl" x="441" y="329"/><use href="#pnl" x="464" y="329"/><use href="#tgr" x="487" y="329"/><use href="#rtb" x="510" y="329"/>
<use href="#grip" x="536" y="327"/><use href="#a1" x="543" y="330"/>
<rect x="563.500" y="326.500" width="22" height="21" fill="#e2e5ec" stroke="#316ac5"/><use href="#a2" x="566" y="330"/><use href="#a3" x="589" y="330"/><use href="#a4" x="612" y="330"/>
<use href="#v1" x="642" y="330"/><use href="#v2" x="665" y="330"/><rect x="684.500" y="326.500" width="22" height="21" fill="#e2e5ec" stroke="#316ac5"/><use href="#v3" x="688" y="329"/><use href="#v4" x="711" y="330"/>
<use href="#grip" x="736" y="327"/><path d="M751 330l2.200 5h5.300l-4.300 3.300 1.600 5.500-4.800-3.300-4.800 3.300 1.600-5.500-4.300-3.300h5.300z" fill="#000"/>
<use href="#ico1" x="772" y="329"/><use href="#ico2" x="795" y="329"/><use href="#ico3" x="818" y="329"/><use href="#ico4" x="841" y="329"/>
<!-- dropdown arrows -->
<path d="M270 363h9l-4.500-5z" fill="#000"/><path d="M270 459h9l-4.500 5z" fill="#000"/>
<!-- scrollbar glyphs -->
<path d="M1186 364l5-5 5 5" fill="none" stroke="#4d6185" stroke-width="2"/><path d="M1186 453l5 5 5-5" fill="none" stroke="#4d6185" stroke-width="2"/>
<path d="M1187 378.500h8M1187 380.500h8M1187 382.500h8M1187 384.500h8" stroke="#8aa8ee"/>
<!-- green arrow -->
<path d="M159 475h5v-4l6 5.500-6 5.500v-4h-5z" fill="#9cc87c" stroke="#607048" stroke-width=".7"/>

<!-- annotations -->
<g fill="none" stroke="#f22" stroke-width="1">
<ellipse cx="913" cy="186" rx="110" ry="42"/>
<ellipse cx="408" cy="42" rx="41" ry="18"/>
<ellipse cx="276" cy="347" rx="34" ry="34"/>
<ellipse cx="567" cy="523.500" rx="97" ry="30.500"/>
</g>
<g fill="#fb0000">
<path d="M480 58L501.500 55 497 61 820 155.500 820 156.500 494 67 496.500 72z"/>
<path d="M441 62L442 62 567 465 574 461 570 482 557 468 562 465z"/>
<path d="M313 368L338 370 333 376 527 494.500 526.500 495.500 328 382 321 384z"/>
</g>
</svg>
</div></body></html>
